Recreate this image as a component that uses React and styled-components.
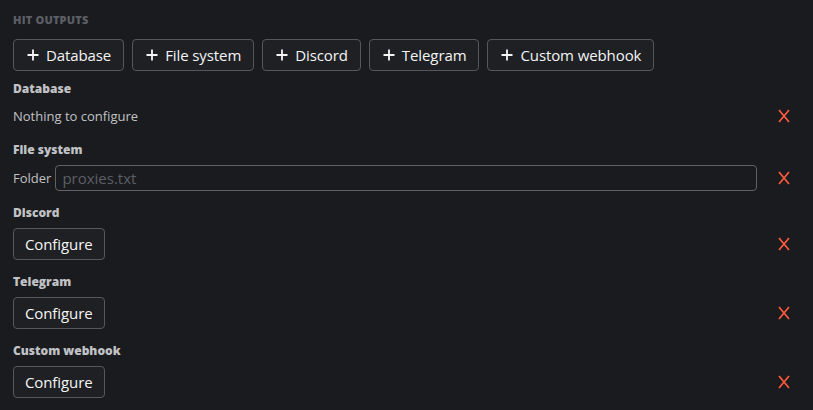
import React from "react";
import styled, { createGlobalStyle } from "styled-components";

const GlobalStyle = createGlobalStyle`
  html, body {
    margin: 0;
    padding: 0;
    background: #1a1b1e;
  }
  body {
    font-family: "Open Sans", "Liberation Sans", sans-serif;
    color: #c1c2c5;
  }
`;

const Page = styled.div`
  width: 813px;
  height: 410px;
  box-sizing: border-box;
  padding: 12px 15px 0 13px;
  background: #1a1b1e;
  overflow: hidden;
`;

const Title = styled.div`
  font-size: 11px;
  line-height: 16px;
  font-weight: 800;
  text-transform: uppercase;
  color: #5c5f66;
  letter-spacing: 0.2px;
`;

const Toolbar = styled.div`
  display: flex;
  gap: 8px;
  margin-top: 11px;
`;

const Button = styled.button`
  display: flex;
  align-items: center;
  gap: 7px;
  height: 32px;
  box-sizing: border-box;
  padding: ${(p) => (p.$icon ? "0 12px 0 13px" : "0 11px")};
  border: 1px solid #55575d;
  border-radius: 4px;
  background: #1f2023;
  color: #f4f4f5;
  font-family: inherit;
  font-size: 15px;
  font-weight: 500;
  letter-spacing: -0.1px;
  cursor: pointer;
`;

const Plus = styled.svg`
  width: 12px;
  height: 12px;
  flex-shrink: 0;
`;

const Sections = styled.div`
  display: flex;
  flex-direction: column;
  gap: 14px;
  margin-top: 10px;
`;

const Section = styled.div`
  display: flex;
  flex-direction: column;
  gap: 7px;
`;

const Label = styled.div`
  font-size: 12px;
  line-height: 16px;
  font-weight: 800;
  color: #c1c2c5;
`;

const Row = styled.div`
  display: flex;
  align-items: center;
  gap: 13px;
  min-height: 24px;
`;

const Content = styled.div`
  flex: 1;
  display: flex;
  align-items: center;
  gap: 4px;
  font-size: 13px;
  color: #c1c2c5;
`;

const Input = styled.input`
  flex: 1;
  height: 26px;
  box-sizing: border-box;
  padding: 0 6px;
  border: 1px solid #5f6166;
  border-radius: 4px;
  background: transparent;
  color: #c1c2c5;
  font-family: inherit;
  font-size: 15px;
  outline: none;

  &::placeholder {
    color: #5c5f66;
  }
`;

const Remove = styled.button`
  width: 28px;
  height: 24px;
  display: flex;
  align-items: center;
  justify-content: center;
  padding: 0;
  border: none;
  background: transparent;
  cursor: pointer;
`;

const PlusIcon = () => (
  <Plus viewBox="0 0 12 12">
    <path d="M6 0.5v11M0.5 6h11" stroke="#f4f4f5" strokeWidth="1.8" />
  </Plus>
);

const CloseIcon = () => (
  <svg width="12" height="14" viewBox="0 0 12 14">
    <path d="M1 1l10 12M11 1L1 13" stroke="#ff5a3c" strokeWidth="1.7" />
  </svg>
);

const outputs = ["Database", "File system", "Discord", "Telegram", "Custom webhook"];

const renderContent = (name) => {
  if (name === "Database") return "Nothing to configure";
  if (name === "File system")
    return (
      <>
        Folder
        <Input placeholder="proxies.txt" />
      </>
    );
  return <Button>Configure</Button>;
};

export default function App() {
  return (
    <>
      <GlobalStyle />
      <Page>
        <Title>Hit outputs</Title>
        <Toolbar>
          {outputs.map((o) => (
            <Button key={o} $icon>
              <PlusIcon />
              {o}
            </Button>
          ))}
        </Toolbar>
        <Sections>
          {outputs.map((o) => (
            <Section key={o}>
              <Label>{o}</Label>
              <Row>
                <Content>{renderContent(o)}</Content>
                <Remove>
                  <CloseIcon />
                </Remove>
              </Row>
            </Section>
          ))}
        </Sections>
      </Page>
    </>
  );
}
